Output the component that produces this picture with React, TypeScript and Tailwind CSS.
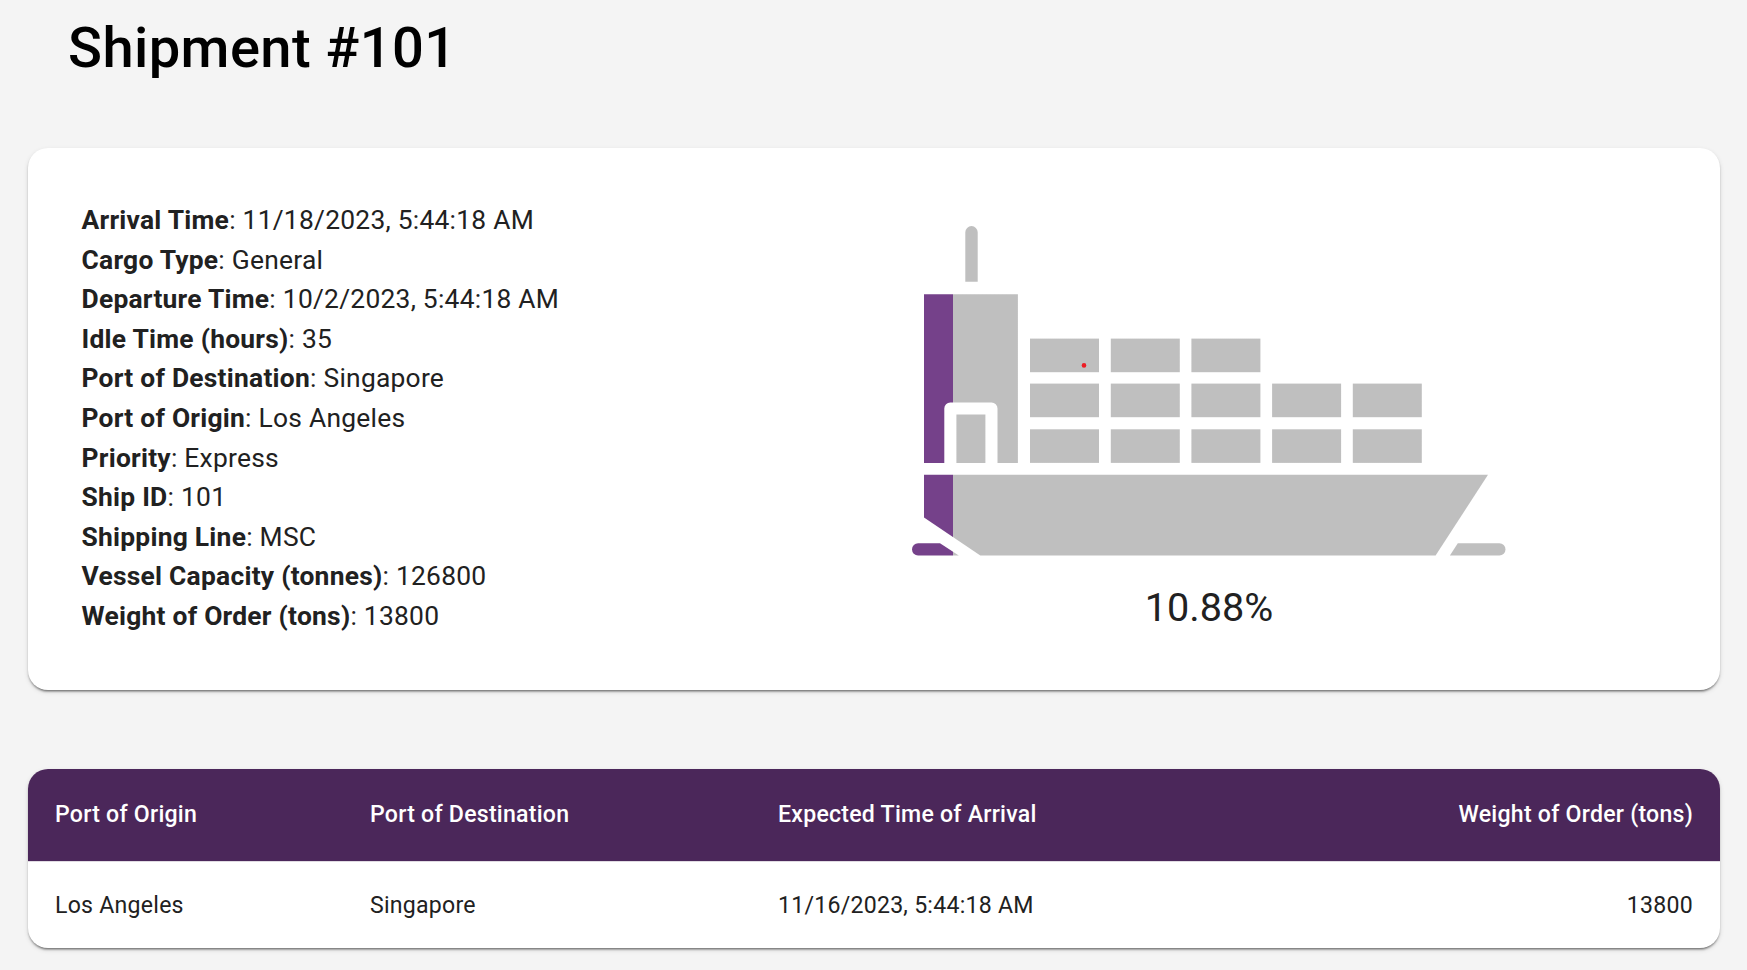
const details: [string, string][] = [
  ['Arrival Time', '11/18/2023, 5:44:18 AM'],
  ['Cargo Type', 'General'],
  ['Departure Time', '10/2/2023, 5:44:18 AM'],
  ['Idle Time (hours)', '35'],
  ['Port of Destination', 'Singapore'],
  ['Port of Origin', 'Los Angeles'],
  ['Priority', 'Express'],
  ['Ship ID', '101'],
  ['Shipping Line', 'MSC'],
  ['Vessel Capacity (tonnes)', '126800'],
  ['Weight of Order (tons)', '13800'],
];

const containers: [number, number][] = [
  [118, 112.6], [198.8, 112.6], [279.4, 112.6],
  [118, 157.6], [198.8, 157.6], [279.4, 157.6], [360.1, 157.6], [440.8, 157.6],
  [118, 203.3], [198.8, 203.3], [279.4, 203.3], [360.1, 203.3], [440.8, 203.3],
];

function Ship() {
  return (
    <svg width="594" height="330" viewBox="0 0 594 330" className="block">
      <defs>
        <linearGradient id="load" gradientUnits="userSpaceOnUse" x1="0" y1="0" x2="594" y2="0">
          <stop offset={41 / 594} stopColor="#75418a" />
          <stop offset={41 / 594} stopColor="#bfbfbf" />
        </linearGradient>
      </defs>
      <g fill="url(#load)">
        <path d="M53.3 55.8V6.3a6.2 6.2 0 0 1 12.4 0v49.5z" />
        <path d="M12 68.2h93.9V237H85.5v-54.4a6 6 0 0 0-6-6H38.3a6 6 0 0 0-6 6V237H12z" />
        <path d="M44.4 188.6h29V237h-29z" />
        {containers.map(([x, y]) => (
          <rect key={`${x}-${y}`} x={x} y={y} width="69" height="33.6" />
        ))}
        <path d="M12 248.8h564L523.6 329.5H68.3L12 291.5z" />
        <path d="M6.1 317.3H28L46.8 329.5H6.1a6.1 6.1 0 0 1 0-12.2z" />
        <path d="M545.8 317.3h41.6a6.1 6.1 0 0 1 0 12.2h-49.5z" />
      </g>
      <circle cx="172" cy="139.4" r="2.3" fill="#ed1c24" />
    </svg>
  );
}

const card =
  'rounded-[20px] bg-white shadow-[0_3px_2px_-2px_rgba(0,0,0,0.35),0_2px_2px_0_rgba(0,0,0,0.2),0_2px_5px_0_rgba(0,0,0,0.12)]';

export default function App() {
  return (
    <div className="flex h-[970px] w-full flex-col overflow-hidden bg-[#f4f4f4] px-7 font-['Roboto',sans-serif] text-[#212121]">
      <h1 className="mt-[13px] h-[70px] pl-10 text-[56.1px] leading-[70px] font-medium tracking-[0.00735em] text-black">
        Shipment #101
      </h1>
      <section className={`${card} mt-[65px] flex h-[542px] w-[1692px] shrink-0`}>
        <ul className="w-[884px] shrink-0 pt-[53px] pl-[53.5px]">
          {details.map(([label, value]) => (
            <li key={label} className="h-[39.6px] text-[26.4px] leading-[39.6px] tracking-[0.00938em]">
              <b className="font-bold">{label}</b>: {value}
            </li>
          ))}
        </ul>
        <div className="flex w-[594px] flex-col items-center pt-[78px]">
          <Ship />
          <p className="mt-[25px] text-[39.6px] leading-[53px]">10.88%</p>
        </div>
      </section>
      <section className={`${card} mt-[79px] h-[179px] w-[1692px] shrink-0 overflow-hidden`}>
        <table className="w-full table-fixed border-collapse text-left text-[23.1px] tracking-[0.01071em]">
          <colgroup>
            <col className="w-[315px]" />
            <col className="w-[408px]" />
            <col className="w-[400px]" />
            <col />
          </colgroup>
          <thead className="bg-[#4b275a] text-white">
            <tr className="h-[92px]">
              <th className="pt-0.5 pl-[27px] font-medium">Port of Origin</th>
              <th className="pt-0.5 pl-[27px] font-medium">Port of Destination</th>
              <th className="pt-0.5 pl-[27px] font-medium">Expected Time of Arrival</th>
              <th className="pt-0.5 pr-[27px] text-right font-medium">Weight of Order (tons)</th>
            </tr>
          </thead>
          <tbody>
            <tr className="h-[87px] border-t border-[#e0dbe2]">
              <td className="pt-[3px] pl-[27px]">Los Angeles</td>
              <td className="pt-[3px] pl-[27px]">Singapore</td>
              <td className="pt-[3px] pl-[27px]">11/16/2023, 5:44:18 AM</td>
              <td className="pt-[3px] pr-[27px] text-right">13800</td>
            </tr>
          </tbody>
        </table>
      </section>
    </div>
  );
}
